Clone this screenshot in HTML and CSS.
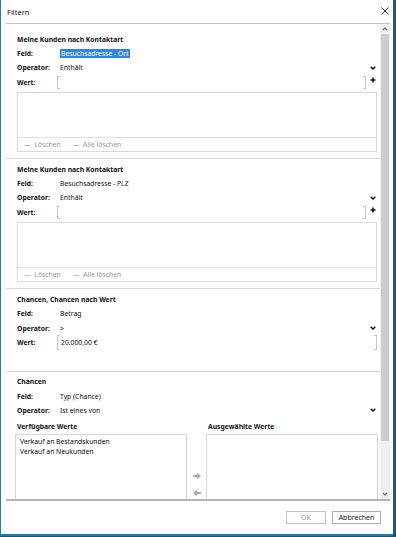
FILE: index.html
```html
<!DOCTYPE html>
<html lang="de">
<head>
  <meta charset="UTF-8" />
  <title>Filtern</title>
  <link rel="stylesheet" href="styles.css">
</head>
<body>
  <div class="dialog">
    <div class="titlebar">
      <span>Filtern</span>
      <svg class="close" width="8" height="8" viewBox="0 0 8 8"><path d="M0.5 0.5 L7.5 7.5 M7.5 0.5 L0.5 7.5" stroke="#333" stroke-width="1" fill="none"/></svg>
    </div>

    <div class="panel">
      <div class="content">
        <!-- Kontaktart: Ort -->
        <div class="section first">
          <div class="row title">Meine Kunden nach Kontaktart</div>
          <div class="row"><span class="label">Feld:</span><span class="value"><span class="selected">Besuchsadresse - Ort</span></span></div>
          <div class="row"><span class="label">Operator:</span><span class="value split">Enthält<svg class="chev" width="6" height="4" viewBox="0 0 6 4"><path d="M0.7 0.7 L3 3 L5.3 0.7" stroke="#000" stroke-width="1.3" fill="none"/></svg></span></div>
          <div class="row"><span class="label">Wert:</span><span class="value"><span class="input"><span class="text"></span></span><svg class="plus" width="6" height="6" viewBox="0 0 6 6"><path d="M3 0.5 V5.5 M0.5 3 H5.5" stroke="#111" stroke-width="1.6"/></svg></span></div>
          <div class="listbox">
            <div class="list-body"></div>
            <div class="list-foot"><span>&#8212;&nbsp;&nbsp;Löschen</span><span>&#8212;&nbsp;&nbsp;Alle löschen</span></div>
          </div>
        </div>

        <!-- Kontaktart: PLZ -->
        <div class="section">
          <div class="row title">Meine Kunden nach Kontaktart</div>
          <div class="row"><span class="label">Feld:</span><span class="value">Besuchsadresse - PLZ</span></div>
          <div class="row"><span class="label">Operator:</span><span class="value split">Enthält<svg class="chev" width="6" height="4" viewBox="0 0 6 4"><path d="M0.7 0.7 L3 3 L5.3 0.7" stroke="#000" stroke-width="1.3" fill="none"/></svg></span></div>
          <div class="row"><span class="label">Wert:</span><span class="value"><span class="input"><span class="text"></span></span><svg class="plus" width="6" height="6" viewBox="0 0 6 6"><path d="M3 0.5 V5.5 M0.5 3 H5.5" stroke="#111" stroke-width="1.6"/></svg></span></div>
          <div class="listbox">
            <div class="list-body"></div>
            <div class="list-foot"><span>&#8212;&nbsp;&nbsp;Löschen</span><span>&#8212;&nbsp;&nbsp;Alle löschen</span></div>
          </div>
        </div>

        <!-- Chancen nach Wert -->
        <div class="section roomy">
          <div class="row title">Chancen, Chancen nach Wert</div>
          <div class="row"><span class="label">Feld:</span><span class="value">Betrag</span></div>
          <div class="row"><span class="label">Operator:</span><span class="value split">&gt;<svg class="chev" width="6" height="4" viewBox="0 0 6 4"><path d="M0.7 0.7 L3 3 L5.3 0.7" stroke="#000" stroke-width="1.3" fill="none"/></svg></span></div>
          <div class="row"><span class="label">Wert:</span><span class="value"><span class="input tall"><span class="text">20.000,00 €</span></span></span></div>
        </div>

        <!-- Chancen Typ -->
        <div class="section last">
          <div class="row title">Chancen</div>
          <div class="row"><span class="label">Feld:</span><span class="value">Typ (Chance)</span></div>
          <div class="row"><span class="label">Operator:</span><span class="value split">Ist eines von<svg class="chev" width="6" height="4" viewBox="0 0 6 4"><path d="M0.7 0.7 L3 3 L5.3 0.7" stroke="#000" stroke-width="1.3" fill="none"/></svg></span></div>
          <div class="pick">
            <div class="pick-head">Verfügbare Werte</div>
            <div></div>
            <div class="pick-head right">Ausgewählte Werte</div>
            <div class="pick-list">
              <div>Verkauf an Bestandskunden</div>
              <div>Verkauf an Neukunden</div>
            </div>
            <div class="movers">
              <svg width="8" height="6" viewBox="0 0 8 6"><path d="M0 2 H4 V0 L8 3 L4 6 V4 H0 Z" fill="#a8a8a8"/></svg>
              <svg width="8" height="6" viewBox="0 0 8 6"><path d="M8 2 H4 V0 L0 3 L4 6 V4 H8 Z" fill="#a8a8a8"/></svg>
            </div>
            <div class="pick-list"></div>
          </div>
        </div>
      </div>

      <div class="scrollbar">
        <svg class="sb-btn" width="10" height="10" viewBox="0 0 10 10"><path d="M3 6 L5 4 L7 6" stroke="#606060" stroke-width="1.1" fill="none"/></svg>
        <div class="thumb"></div>
        <div class="track"></div>
        <svg class="sb-btn" width="10" height="10" viewBox="0 0 10 10"><path d="M3 4 L5 6 L7 4" stroke="#606060" stroke-width="1.1" fill="none"/></svg>
      </div>
    </div>

    <div class="footer">
      <button class="btn disabled">OK</button>
      <button class="btn">Abbrechen</button>
    </div>
  </div>
</body>
</html>
```

FILE: styles.css
```css
* {
  margin: 0;
  padding: 0;
  box-sizing: border-box;
}
body {
  background: #1f5878;
  height: 537px;
  overflow: hidden;
  font-family: 'Noto Sans', 'Liberation Sans', sans-serif;
  font-size: 6.8px;
  color: #111;
}
.dialog {
  width: 393px;
  height: 536px;
  background: white;
  border-left: 1px solid #1b7cc1;
  border-bottom: 2px solid #1b7cc1;
  display: flex;
  flex-direction: column;
}
.titlebar {
  height: 23px;
  display: flex;
  justify-content: space-between;
  align-items: center;
  padding: 0 4px 0 6px;
  font-size: 7.5px;
}
.close {
  margin-top: -2px;
}
.panel {
  height: 478px;
  margin: 0 3px 0 5px;
  border-top: 1px solid #c4c4c4;
  border-bottom: 2px solid #b4b4b4;
  display: flex;
}
.content {
  flex: 1;
  overflow: hidden;
}
.section {
  padding: 3px 3px 6.5px 11px;
  border-bottom: 1px solid #d8d8d8;
}
.section.first {
  padding-top: 8px;
}
.section.roomy {
  padding-bottom: 21px;
}
.section.last {
  border-bottom: none;
}
.row {
  height: 14.3px;
  display: flex;
  align-items: center;
}
.title {
  font-weight: bold;
}
.label {
  width: 40px;
  font-weight: bold;
}
.value {
  flex: 1;
  display: flex;
  align-items: center;
  padding-left: 3px;
}
.value.split {
  justify-content: space-between;
  padding-right: 1px;
}
.selected {
  background: #2f86db;
  color: white;
  padding: 0 1px;
  line-height: 9px;
}
.input {
  flex: 1;
  display: flex;
  align-items: center;
  height: 11px;
  margin-left: -3px;
}
.input.tall {
  height: 13px;
}
.input::before,
.input::after {
  content: "";
  width: 2px;
  height: 100%;
  border: 1px solid #c8c8c8;
}
.input::before {
  border-right: none;
}
.input::after {
  border-left: none;
}
.input .text {
  flex: 1;
  padding-left: 1px;
}
.plus {
  margin: -4px 1px 0 4px;
}
.listbox {
  margin-top: 2.5px;
  height: 60px;
  border: 1px solid #dadada;
  display: flex;
  flex-direction: column;
}
.list-body {
  flex: 1;
}
.list-foot {
  height: 14px;
  border-top: 1px solid #e2e2e2;
  display: flex;
  align-items: center;
  gap: 12px;
  padding-left: 6px;
  color: #9a9a9a;
}
.pick {
  display: grid;
  grid-template-columns: 172px 19px 172px;
  grid-template-rows: 14.3px 80px;
  margin: 2px 0 0 -2px;
}
.pick-head {
  font-weight: bold;
  display: flex;
  align-items: center;
  padding-left: 2px;
}
.pick-list {
  border: 1px solid #d8d8d8;
  padding: 2px 4px;
  line-height: 10px;
}
.movers {
  display: flex;
  flex-direction: column;
  align-items: center;
  gap: 11px;
  padding-top: 39px;
}
.scrollbar {
  width: 10px;
  background: #f0f0f0;
  display: flex;
  flex-direction: column;
}
.sb-btn {
  display: block;
}
.thumb {
  height: 407px;
  margin: 0 1px;
  background: #cdcdcd;
}
.track {
  flex: 1;
}
.footer {
  flex: 1;
  display: flex;
  justify-content: flex-end;
  align-items: flex-start;
  gap: 6px;
  padding: 10px 12px 0 0;
}
.btn {
  height: 13px;
  font-family: 'Noto Sans', 'Liberation Sans', sans-serif;
  font-size: 7px;
  background: #fdfdfd;
  border: 1px solid #adadad;
  color: #222;
  width: 49px;
}
.btn.disabled {
  width: 40px;
  color: #a0a0a0;
  border-color: #c4c4c4;
}
```
